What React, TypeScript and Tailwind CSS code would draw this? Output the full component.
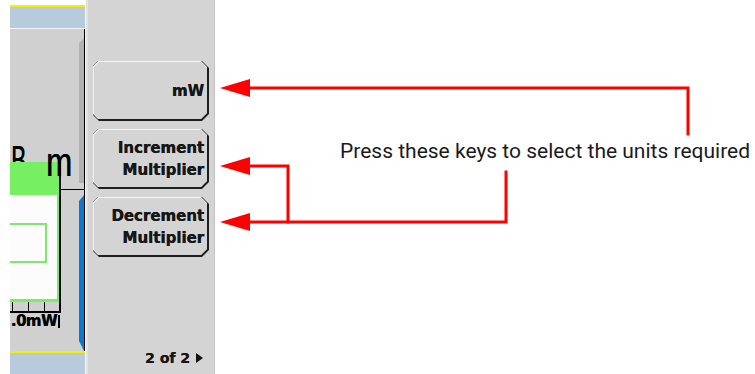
import React from "react";

const chamferOuter =
  "[clip-path:polygon(5px_0,calc(100%_-_7px)_0,100%_7px,100%_calc(100%_-_7px),calc(100%_-_7px)_100%,6px_100%,0_calc(100%_-_6px),0_5px)]";
const chamferInner =
  "[clip-path:polygon(5px_0,calc(100%_-_6px)_0,100%_6px,100%_calc(100%_-_6px),calc(100%_-_6px)_100%,5px_100%,0_calc(100%_-_5px),0_5px)]";

function SoftKey({ lines }: { lines: string[] }) {
  return (
    <div className={`h-[60px] w-[116px] bg-[#1e1e1e] pr-[2px] pb-[2px] ${chamferOuter}`}>
      <div className={`h-full w-full bg-[#f4f4f4] pt-[1px] pl-[1px] ${chamferInner}`}>
        <div
          className={`h-full w-full bg-[#d4d4d4] flex flex-col justify-center items-end pr-[3px] font-['DejaVu_Sans',sans-serif] font-bold text-[15px] leading-[22px] text-[#161616] [text-shadow:0.4px_0_0_#161616] ${chamferInner}`}
        >
          {lines.map((l) => (
            <span key={l}>{l}</span>
          ))}
        </div>
      </div>
    </div>
  );
}

export default function App() {
  return (
    <div className="w-[755px] h-[374px] bg-white flex overflow-hidden">
      {/* white margin */}
      <div className="w-[10px] shrink-0" />

      {/* left instrument display */}
      <div className="w-[75px] shrink-0 flex flex-col">
        <div className="h-[5px] bg-white" />
        <div className="h-[2px] bg-[#f5f000]" />
        <div className="h-[21px] bg-[#b7cbdc]" />
        <div className="h-[1px] bg-[#f4f4f4]" />
        <div className="flex-1 flex bg-[#d0d0d0]">
          {/* content column */}
          <div className="w-[69px] relative flex flex-col">
            <span className="absolute left-[1px] top-[111px] font-['Liberation_Sans',sans-serif] text-[41px] leading-none text-black scale-x-[0.55] origin-left [text-shadow:0.7px_0_0_#000]">
              B
            </span>
            <div className="h-[133px]" />
            <div className="flex">
              <div className="w-[51px] border-r-2 border-black flex flex-col relative z-10">
                <div className="h-[33px] bg-[#76ef63]" />
                <div className="h-[107px] bg-[#fcfcfc] border-r-2 border-b-[3px] border-[#76ef63] pt-[28px]">
                  <div className="w-[37px] h-[40px] border-2 border-l-0 border-[#7ee86e] bg-[#fcfcfc]" />
                </div>
              </div>
              <div className="flex-1 pt-[27px]">
                <div className="h-[1px] bg-black" />
              </div>
            </div>
            <span className="absolute left-[36px] top-[113px] z-20 font-['Liberation_Sans',sans-serif] text-[41px] leading-none text-black scale-x-[0.76] origin-left [text-shadow:0.7px_0_0_#000]">
              m
            </span>
            {/* ticks */}
            <div className="w-[51px] h-[11px] border-r-2 border-b-[2px] border-black flex">
              <div className="w-[2px]" />
              <div className="w-[1px] bg-black" />
              <div className="w-[15px]" />
              <div className="w-[1px] bg-black" />
              <div className="w-[15px]" />
              <div className="w-[1px] bg-black" />
            </div>
            <div className="w-[50px] h-[16px] flex justify-end items-center gap-[1px]">
              <span className="font-['DejaVu_Sans',sans-serif] font-bold text-[15px] leading-none text-black tracking-[-0.5px] [text-shadow:0.3px_0_0_#000]">
                .0mW
              </span>
              <div className="w-[2px] h-[13px] bg-black" />
            </div>
          </div>
          {/* strip */}
          <div className="w-[5px] flex flex-col">
            <div className="h-[9px]" />
            <div className="h-[145px] bg-[#b2b2b2] [clip-path:polygon(100%_0,100%_100%,0_100%,0_5px)]" />
            <div className="h-[6px]" />
            <div className="h-[1px] bg-black" />
            <div className="h-[5px]" />
            <div className="flex-1 bg-[#0b79d4] [clip-path:polygon(100%_0,100%_100%,100%_100%,0_calc(100%_-_10px),0_6px)]" />
          </div>
          <div className="w-[1px] bg-black" />
        </div>
        <div className="h-[2px] bg-[#f5f000]" />
        <div className="h-[21px] bg-[#b7cbdc]" />
      </div>

      {/* separator */}
      <div className="w-[3px] shrink-0 flex">
        <div className="w-[1px] bg-[#f7f7f7]" />
        <div className="w-[2px] bg-[#e2e2e2]" />
      </div>

      {/* softkey panel */}
      <div className="w-[127px] shrink-0 bg-[#d4d4d4] border-r border-[#c4c4c4] flex flex-col pl-[5px] pt-[61px]">
        <div className="flex flex-col gap-[8px]">
          <SoftKey lines={["mW"]} />
          <SoftKey lines={["Increment", "Multiplier"]} />
          <SoftKey lines={["Decrement", "Multiplier"]} />
        </div>
        <div className="flex-1" />
        <div className="h-[20px] mb-[6px] flex items-center justify-end pr-[11px] gap-[6px]">
          <span className="font-['DejaVu_Sans',sans-serif] font-bold text-[14px] leading-none text-[#161616] [text-shadow:0.3px_0_0_#161616]">
            2 of 2
          </span>
          <svg width="7" height="10" viewBox="0 0 7 10">
            <polygon points="0,0 7,5 0,10" fill="#111" />
          </svg>
        </div>
      </div>

      {/* annotation area */}
      <div className="flex-1 relative">
        <svg
          className="absolute inset-0"
          width="539"
          height="374"
          viewBox="0 0 539 374"
        >
          <g fill="none" stroke="#ff0000" strokeWidth="3" strokeLinejoin="miter" strokeLinecap="square">
            <path d="M34 88 H473 V134" />
            <path d="M34 166 H73 V222" />
            <path d="M34 222 H291 V172" />
          </g>
          <g fill="#ff0000">
            <polygon points="5,88 35,79 35,97" />
            <polygon points="5,166 35,157 35,175" />
            <polygon points="5,222 35,213 35,231" />
          </g>
        </svg>
        <div className="relative pl-[125px] pt-[140px]">
          <span className="font-['Roboto',sans-serif] text-[21px] leading-none text-[#1a1a1a] whitespace-nowrap">
            Press these keys to select the units required
          </span>
        </div>
      </div>
    </div>
  );
}
